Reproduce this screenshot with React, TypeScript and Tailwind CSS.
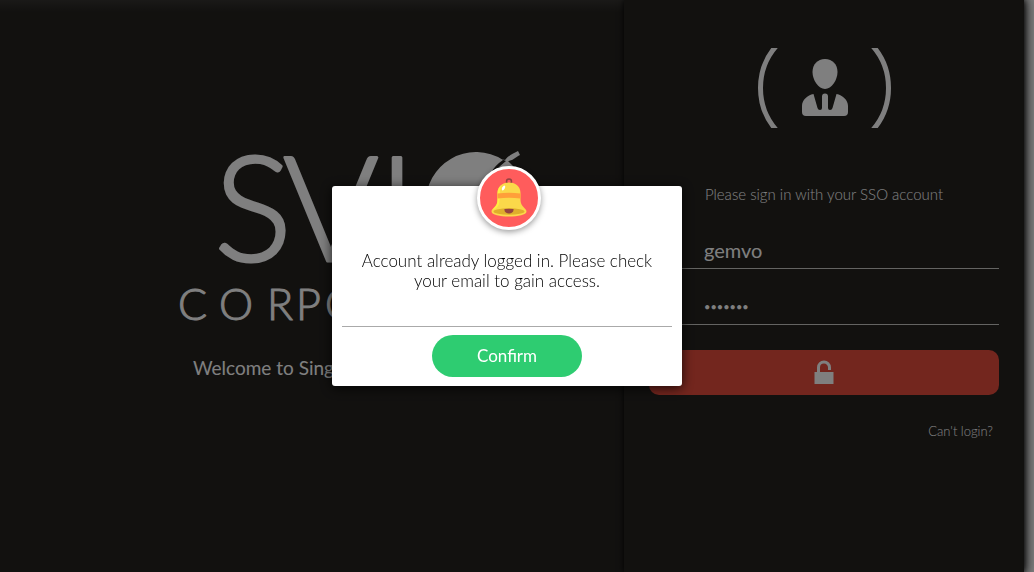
import React, { useState } from "react";

function CompanyLogo() {
  return (
    <svg viewBox="-10 -40 420 240" className="h-60 w-[420px] max-w-none" role="img" aria-label="SVIO Corporation" fill="#fff">
      <g fontFamily="Lato, sans-serif" fontWeight="300" stroke="#fff" strokeLinejoin="round">
        <text x="34 103 198" y="119" fontSize="146" strokeWidth="3">SVI</text>
        <text x="-2 39 87 116 145 190 220 256 280 292 337" y="178" fontSize="43" strokeWidth="1">CORPORATION</text>
      </g>
      <path d="M246 62A50 50 0 0 1 323 18Q308 28 305 48V66H246Z" />
      <path d="M321 17L325 18C329 13 334 11 338 9L340 13C336 15 332 19 328 19L334 25H319L326 19Z" />
    </svg>
  );
}

function UserBadge() {
  return (
    <svg viewBox="0 0 134 80" className="h-20 w-[134px]" aria-hidden="true">
      <circle cx="67.500" cy="40" r="64" fill="none" stroke="#fff" strokeWidth="5" />
      <g fill="#fff" transform="translate(.5 0)">
        <path d="M67.500 11C75 11 80 16.500 80 24C80 32 74 41 67.500 41C61 41 55 32 55 24C55 16.500 60 11 67.500 11Z" />
        <path d="M56 46L60 60Q60.500 62 62.500 62Q64.500 62 64.500 60V48.500Q64.500 45.500 67.500 45.500Q70.500 45.500 70.500 48.500V60Q70.500 62 72.500 62Q74.500 62 75 60L79 46C85 47 90.500 52 90.500 58V64Q90.500 68 86.500 68H48.500Q44.500 68 44.500 64V58C44.500 52 50 47 56 46Z" />
      </g>
    </svg>
  );
}

function UnlockIcon() {
  return (
    <svg viewBox="0 0 20 26" className="h-[26px] w-5" aria-hidden="true">
      <path d="M4.500 13V7.500A5.500 5.500 0 0 1 15.500 7.500V10" fill="none" stroke="#fff" strokeWidth="3" />
      <path d="M.5 12H19.500V24H.5Z" fill="#fff" />
    </svg>
  );
}

function BellIcon() {
  return (
    <svg viewBox="0 0 36 40" className="h-10 w-9" aria-hidden="true">
      <circle cx="18" cy="3.500" r="2.500" fill="none" stroke="#96433f" strokeWidth="1.500" />
      <path d="M18 4.500C25 4.500 29.500 9 29.500 15V22C29.500 29 35.500 30 35.500 33.500C35.500 37 27 38.500 18 38.500C9 38.500 .5 37 .5 33.500C.5 30 6.500 29 6.500 22V15C6.500 9 11 4.500 18 4.500Z" fill="#fbd84a" />
      <path d="M6.500 22V15C6.500 12 8 9 10 7.500Q8.500 14 8.500 22C8.500 29 4 31 1.500 32C3 29.500 6.500 28 6.500 22Z" fill="#fff13f" />
      <path d="M6.500 15.500Q18 14 29.500 15.500V20.500Q18 19 6.500 20.500Z" fill="#ff9f3a" />
      <ellipse cx="18" cy="33.500" rx="15.500" ry="3.200" fill="#dfae2c" />
      <path d="M13.500 31Q18 30.300 22.500 31C23 34 20.500 35.500 18 35.500C15.500 35.500 13 34 13.500 31Z" fill="#96433f" />
      <ellipse cx="12.500" cy="10" rx="1.300" ry="2.600" transform="rotate(30 12.5 10)" fill="#fff" />
    </svg>
  );
}

function AlertDialog({ onConfirm }: { onConfirm: () => void }) {
  return (
    <div className="fixed inset-0 flex items-center justify-center bg-black/50 pr-5">
      <div
        role="alertdialog"
        aria-modal="true"
        aria-describedby="alert-message"
        className="relative flex min-h-[200px] w-[350px] flex-col rounded-[3px] bg-white px-2.5 pt-[65px] pb-[9px] shadow-[0_2px_12px_rgba(0,0,0,0.8)]"
      >
        <div className="absolute -top-5 left-[145px] flex size-16 items-center justify-center rounded-full border-3 border-white bg-[#ff5c5c] shadow-[0_2px_6px_rgba(0,0,0,0.4)]">
          <BellIcon />
        </div>
        <p id="alert-message" className="grow px-2 text-center text-[17px] leading-5 text-black">
          Account already logged in. Please check your email to gain access.
        </p>
        <div className="flex justify-center border-t border-[#aaa] pt-2">
          <button
            type="button"
            onClick={onConfirm}
            className="h-[42px] w-[150px] rounded-full bg-[#2ecc71] text-[17px] font-normal text-white"
          >
            Confirm
          </button>
        </div>
      </div>
    </div>
  );
}

export default function App() {
  const [alertOpen, setAlertOpen] = useState(true);
  const [username, setUsername] = useState("gemvo");
  const [password, setPassword] = useState("welcome");

  return (
    <div className="min-h-screen bg-white pr-2.5 font-['Lato',sans-serif] font-light">
      <div className="flex min-h-screen bg-[#24221f] text-white shadow-[0_0_12px_2px_rgba(0,0,0,0.8)]">
        <main className="flex grow flex-col items-center bg-linear-to-b from-[#353330] to-[#24221f] to-[12px] pt-[102px]">
          <div className="pl-[136px]">
            <CompanyLogo />
          </div>
          <h1 className="mt-2.5 pr-3 text-[19px] leading-8 font-normal">Welcome to Single Sign On</h1>
        </main>

        <aside className="w-[400px] shrink-0 bg-[#24221f] px-[25px] pt-12 shadow-[0_0_6px_#000]">
          <form onSubmit={(event) => event.preventDefault()} className="flex flex-col">
            <div className="flex justify-center">
              <UserBadge />
            </div>
            <p className="mt-14 text-center text-[15px] leading-5 text-white">Please sign in with your SSO account</p>
            <input
              type="text"
              aria-label="Username"
              value={username}
              onChange={(event) => setUsername(event.target.value)}
              className="mt-7 h-[37px] border-b border-[#c8c8c4] bg-transparent pl-[55px] text-xl font-normal outline-none"
            />
            <input
              type="password"
              aria-label="Password"
              value={password}
              onChange={(event) => setPassword(event.target.value)}
              className="mt-[19px] h-[37px] border-b border-[#c8c8c4] bg-transparent pl-[55px] text-[11px] font-normal outline-none"
            />
            <button
              type="submit"
              aria-label="Sign in"
              className="mt-[25px] flex h-[45px] items-center justify-center rounded-[10px] bg-[#e74c3c]"
            >
              <UnlockIcon />
            </button>
            <a href="#help" className="mt-[26px] self-end pr-1.5 text-[13px] leading-5 text-white">
              Can't login?
            </a>
          </form>
        </aside>
      </div>
      {alertOpen && <AlertDialog onConfirm={() => setAlertOpen(false)} />}
    </div>
  );
}
